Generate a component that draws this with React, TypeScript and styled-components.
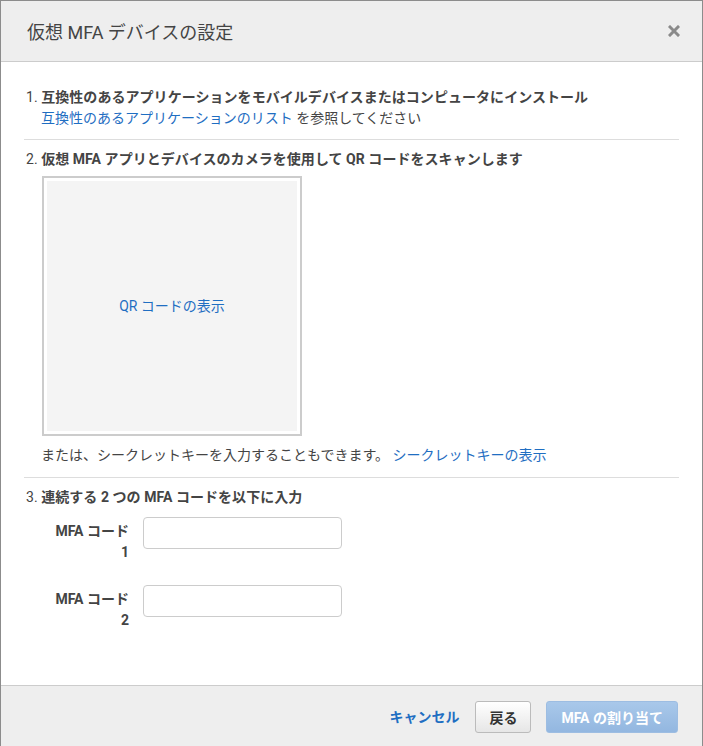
import styled, { createGlobalStyle } from 'styled-components';

const GlobalStyle = createGlobalStyle`
  html, body {
    margin: 0;
    padding: 0;
    background: #fff;
  }
  body {
    font-family: Roboto, "Noto Sans CJK JP", "Noto Sans", sans-serif;
    font-size: 14px;
    color: #444;
  }
`;

const Modal = styled.div`
  box-sizing: border-box;
  width: 703px;
  height: 746px;
  border: 1px solid #8c8c8c;
  border-bottom: none;
  display: flex;
  flex-direction: column;
  background: #fff;
`;

const Header = styled.header`
  height: 60px;
  flex: none;
  display: flex;
  align-items: center;
  justify-content: space-between;
  padding: 0 22px 0 26px;
  background: #eee;
  border-bottom: 1px solid #ccc;
`;

const Title = styled.h1`
  margin: 0;
  font-size: 18px;
  font-weight: 400;
  color: #444;
`;

const CloseButton = styled.button`
  border: none;
  background: transparent;
  padding: 0;
  display: flex;
  cursor: pointer;
`;

const Body = styled.div`
  flex: 1;
  padding: 25px 23px 0;
`;

const Section = styled.section<{ $first?: boolean; $last?: boolean }>`
  padding: ${p => (p.$first ? '0' : '9px')} 0 ${p => (p.$first ? '11px' : '12px')};
  border-bottom: ${p => (p.$last ? 'none' : '1px solid #ddd')};
  line-height: 20px;
`;

const StepTitle = styled.div`
  padding-left: 2px;
  font-weight: 700;
  color: #444;
  letter-spacing: 0.05px;

  span {
    font-weight: 400;
  }
`;

const Note = styled.div`
  padding-left: 17px;
  margin-top: 1px;
`;

const Link = styled.a<{ $bold?: boolean }>`
  color: #1f6ec2;
  text-decoration: none;
  font-weight: ${p => (p.$bold ? 700 : 400)};
  cursor: pointer;
`;

const QrFrame = styled.div`
  box-sizing: border-box;
  width: 260px;
  height: 260px;
  margin: 7px 0 9px 18px;
  border: 2px solid #ccc;
  padding: 3px;
  background: #fff;
`;

const QrInner = styled.div`
  height: 100%;
  background: #f4f4f4;
  display: flex;
  align-items: center;
  justify-content: center;
`;

const Fields = styled.div`
  margin-top: 10px;
  display: flex;
  flex-direction: column;
  gap: 22px;
`;

const FieldRow = styled.div`
  display: flex;
  align-items: flex-start;
  gap: 14px;
`;

const Label = styled.label`
  width: 105px;
  padding-top: 4px;
  text-align: right;
  font-weight: 700;
  line-height: 21px;
  color: #444;
`;

const Input = styled.input`
  box-sizing: border-box;
  width: 199px;
  height: 32px;
  border: 1px solid #ccc;
  border-radius: 4px;
  padding: 0 8px;
  font: inherit;
`;

const Footer = styled.footer`
  flex: none;
  height: 61px;
  box-sizing: border-box;
  border-top: 1px solid #ccc;
  background: #eee;
  display: flex;
  justify-content: flex-end;
  align-items: flex-start;
  padding: 15px 24px 0 0;
  gap: 15px;
`;

const CancelLink = styled(Link)`
  line-height: 32px;
  margin-right: 1px;
`;

const Button = styled.button<{ $primary?: boolean }>`
  box-sizing: border-box;
  height: 32px;
  padding: 0 ${p => (p.$primary ? '14px' : '13px')};
  border-radius: 3px;
  font-family: inherit;
  font-size: 14px;
  font-weight: 700;
  cursor: pointer;
  border: 1px solid ${p => (p.$primary ? '#9dbde2' : '#bbb')};
  color: ${p => (p.$primary ? '#fff' : '#333')};
  background: ${p =>
    p.$primary
      ? 'linear-gradient(#a9c8ea, #93b7e0)'
      : 'linear-gradient(#fff, #e6e6e6)'};
`;

export default function App() {
  return (
    <>
      <GlobalStyle />
      <Modal>
        <Header>
          <Title>仮想 MFA デバイスの設定</Title>
          <CloseButton aria-label="閉じる">
            <svg width="12" height="12" viewBox="0 0 12 12">
              <path d="M2 2 L10 10 M10 2 L2 10" stroke="#8a8a8a" strokeWidth="3" strokeLinecap="square" />
            </svg>
          </CloseButton>
        </Header>
        <Body>
          <Section $first>
            <StepTitle>
              <span>1. </span>互換性のあるアプリケーションをモバイルデバイスまたはコンピュータにインストール
            </StepTitle>
            <Note>
              <Link>互換性のあるアプリケーションのリスト</Link> を参照してください
            </Note>
          </Section>
          <Section>
            <StepTitle>
              <span>2. </span>仮想 MFA アプリとデバイスのカメラを使用して QR コードをスキャンします
            </StepTitle>
            <QrFrame>
              <QrInner>
                <Link>QR コードの表示</Link>
              </QrInner>
            </QrFrame>
            <Note>
              または、シークレットキーを入力することもできます。 <Link>シークレットキーの表示</Link>
            </Note>
          </Section>
          <Section $last>
            <StepTitle>
              <span>3. </span>連続する 2 つの MFA コードを以下に入力
            </StepTitle>
            <Fields>
              {[1, 2].map(n => (
                <FieldRow key={n}>
                  <Label>
                    MFA コード
                    <br />
                    {n}
                  </Label>
                  <Input />
                </FieldRow>
              ))}
            </Fields>
          </Section>
        </Body>
        <Footer>
          <CancelLink $bold>キャンセル</CancelLink>
          <Button>戻る</Button>
          <Button $primary>MFA の割り当て</Button>
        </Footer>
      </Modal>
    </>
  );
}
